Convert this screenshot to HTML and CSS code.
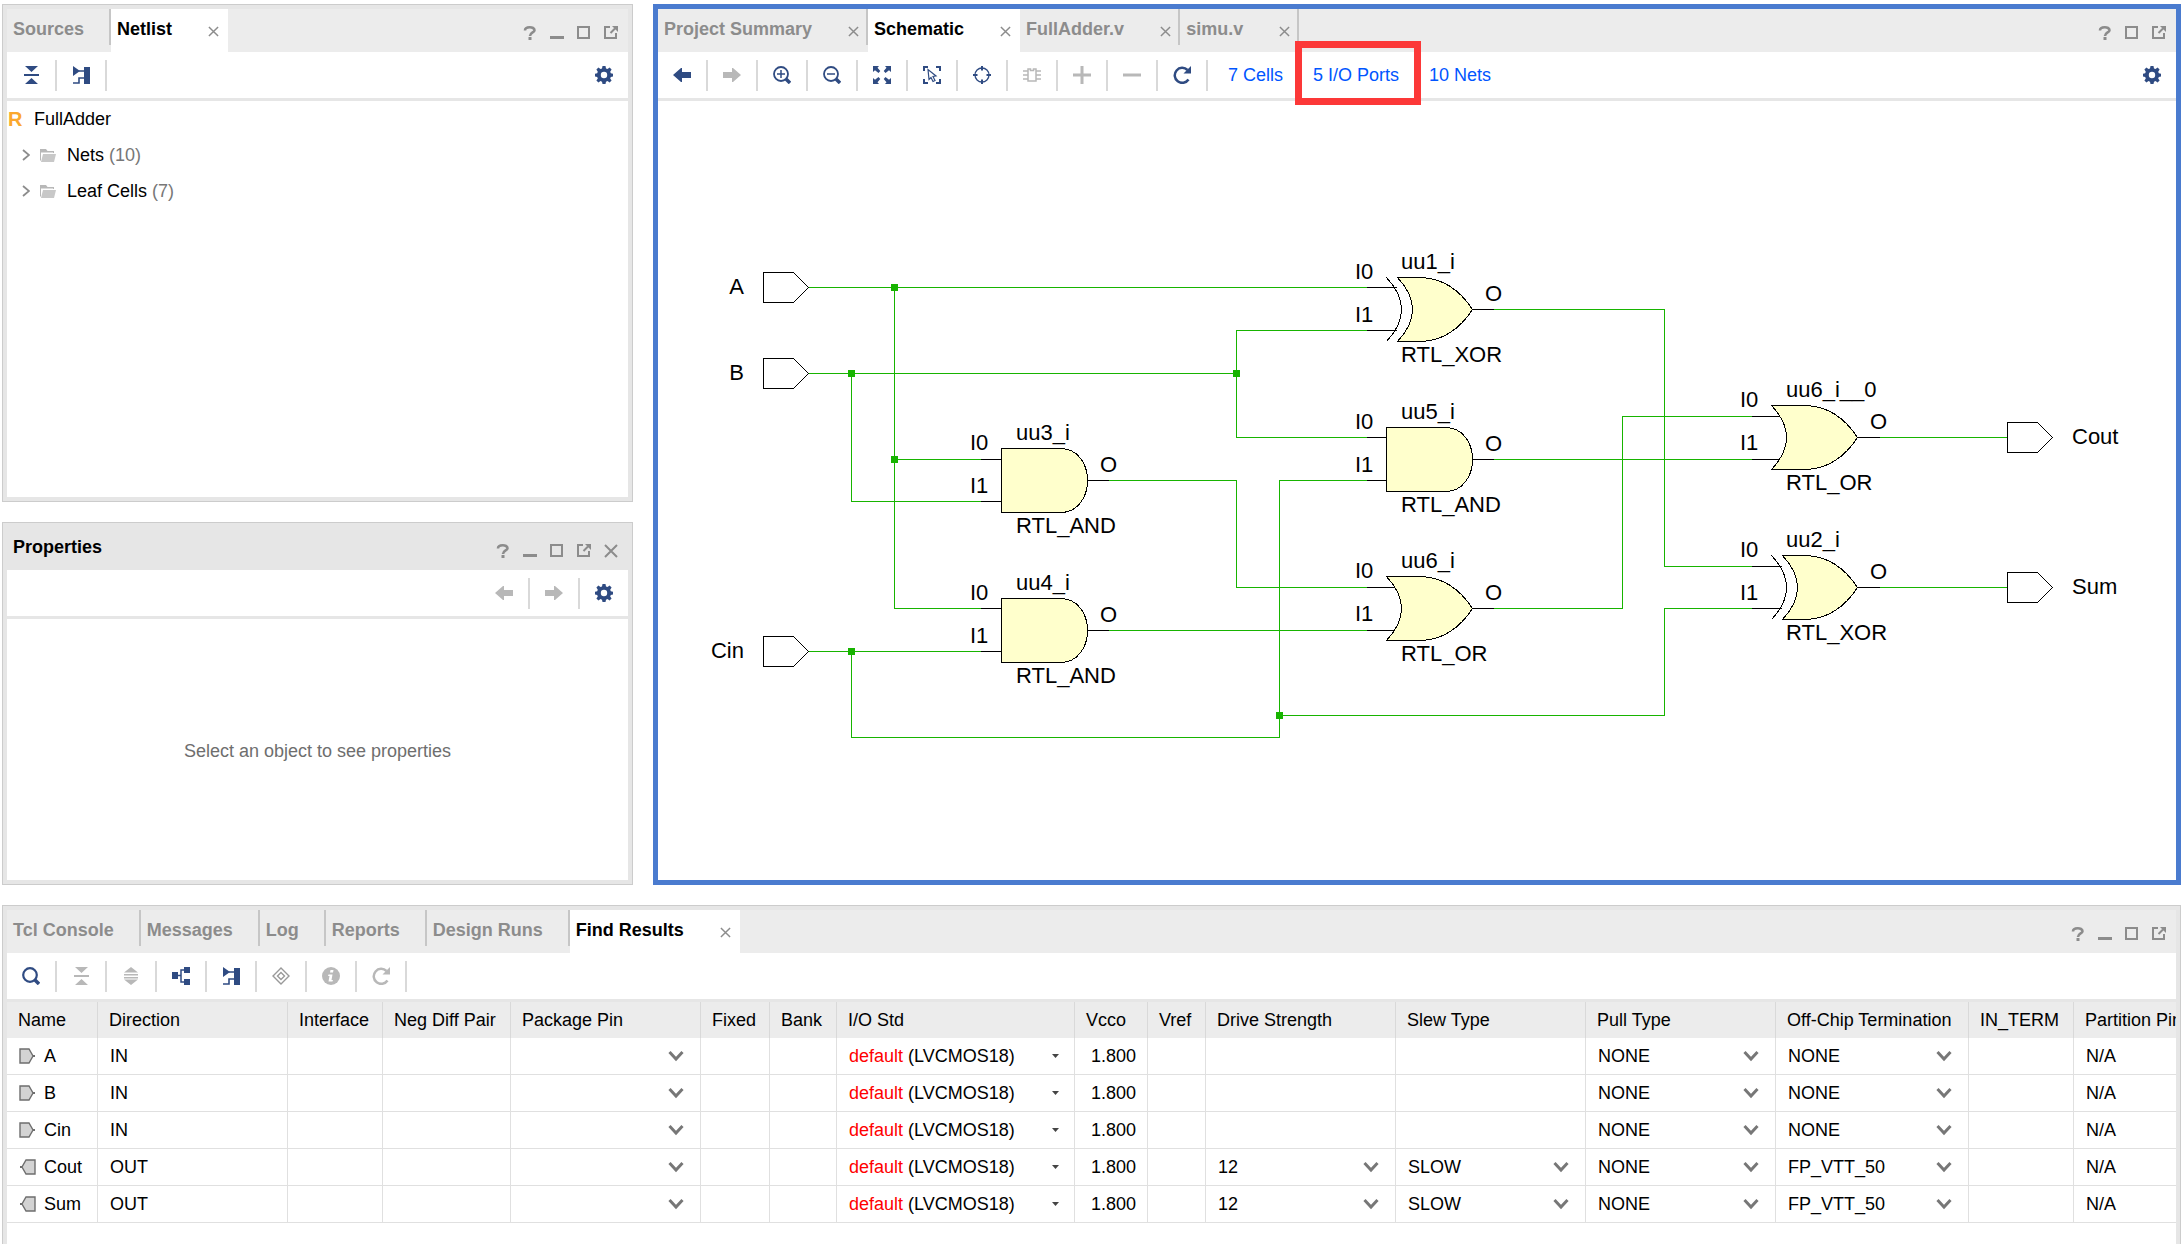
FILE: index.html
```html
<!DOCTYPE html>
<html lang="en">
<head>
<meta charset="utf-8">
<title>FullAdder - Schematic</title>
<link rel="stylesheet" href="styles.css">
</head>
<body>
<svg class="sprite" aria-hidden="true">
  <symbol id="i-back" viewBox="0 0 18 18"><path fill="currentColor" d="M0 9 8 2h1v4h9v6H9v4H8z"/></symbol>
  <symbol id="i-forward" viewBox="0 0 18 18"><path fill="currentColor" d="M18 9 10 2H9v4H0v6h9v4h1z"/></symbol>
  <symbol id="i-collapse" viewBox="0 0 18 18"><path fill="currentColor" d="M3 0h13L9.500 6zM2 8h15v2H2zM3 18h13L9.500 12z"/></symbol>
  <symbol id="i-expand" viewBox="0 0 18 18"><path fill="currentColor" d="M9 0l7 5.500H2zM2 7h14v1.500H2zM2 10h14v1.500H2zM9 18l7-5.500H2z"/></symbol>
  <symbol id="i-netlist" viewBox="0 0 18 18"><path fill="currentColor" d="M1 0v10l7-5zM12 1h6v17h-6z"/><path fill="none" stroke="currentColor" stroke-width="1.600" d="M7 5h5M1 17h6v-5h5"/></symbol>
  <symbol id="i-gear" viewBox="0 0 18 18"><path fill="currentColor" fill-rule="evenodd" d="M7.500 0h3l.5 2.400 1.500.7 2.100-1.500 2 2-1.400 2.200.6 1.400 2.200.5v2.800l-2.200.5-.6 1.400 1.400 2.100-2 2-2.100-1.400-1.500.6-.5 2.300h-3L7 15.700l-1.500-.6-2.100 1.400-2-2 1.400-2.100-.6-1.400L0 10.500V7.700l2.200-.5.6-1.400L1.400 3.600l2-2 2.100 1.500L7 2.400zM9 5.800a3.200 3.200 0 1 0 0 6.400 3.200 3.200 0 0 0 0-6.400z"/></symbol>
  <symbol id="i-search" viewBox="0 0 18 18"><g fill="none" stroke="currentColor"><circle cx="8" cy="8" r="6.800" stroke-width="2.200"/><path d="m13 13 4 4" stroke-width="3.500"/></g></symbol>
  <symbol id="i-zoomin" viewBox="0 0 18 18"><g fill="none" stroke="currentColor"><circle cx="8" cy="8" r="7" stroke-width="1.800"/><path d="m13 13 4 4" stroke-width="3.500"/><path d="M4 8h8M8 4v8" stroke-width="1.500"/></g></symbol>
  <symbol id="i-zoomout" viewBox="0 0 18 18"><g fill="none" stroke="currentColor"><circle cx="8" cy="8" r="7" stroke-width="1.800"/><path d="m13 13 4 4" stroke-width="3.500"/><path d="M4 8h8" stroke-width="1.500"/></g></symbol>
  <symbol id="i-fit" viewBox="0 0 18 18"><path fill="currentColor" d="M0 0h6L4.500 1.700 7.300 5 5.500 7 2 4.200 0 6zM18 0v6l-2-1.800L12.500 7l-1.800-2 2.800-3.300L12 0zM0 18v-6l2 1.800L5.500 11l1.800 2-2.800 3.300L6 18zM18 18h-6l1.500-1.700-2.800-3.300 1.800-2 3.500 2.800 2-1.800z"/></symbol>
  <symbol id="i-select" viewBox="0 0 18 18"><g fill="none" stroke="currentColor"><path stroke-width="2" d="M1 5V1h4M13 1h4v4M1 13v4h4M13 17h4v-4"/><path stroke-width="1.200" d="m5 3.500 1 10 2-2 2 4 2-1-2-4 3-.5z"/></g></symbol>
  <symbol id="i-target" viewBox="0 0 18 18"><g fill="none" stroke="currentColor"><circle cx="9" cy="9" r="7" stroke-width="1.300"/><path stroke-width="2" d="M9 0v4.500M9 13.500V18M0 9h4.500M13.500 9H18"/></g></symbol>
  <symbol id="i-cell" viewBox="0 0 18 18"><path fill="none" stroke="currentColor" stroke-width="1.500" d="M5 3h2.500v1.500h3V3H13v12H5zM0 5h5M0 9h5M0 13h5M13 5h5M13 9h5M13 13h5"/></symbol>
  <symbol id="i-plus" viewBox="0 0 18 18"><path fill="currentColor" d="M7.500 0h3v7.500H18v3h-7.500V18h-3v-7.500H0v-3h7.500z"/></symbol>
  <symbol id="i-minus" viewBox="0 0 18 18"><path fill="currentColor" d="M0 7.500h18v3H0z"/></symbol>
  <symbol id="i-reload" viewBox="0 0 18 18"><path fill="none" stroke="currentColor" stroke-width="2.500" d="M15.500 13.500A7.500 7.500 0 1 1 14.500 4"/><path fill="currentColor" d="M18 0v7.500h-7.500z"/></symbol>
  <symbol id="i-tree" viewBox="0 0 18 18"><path fill="currentColor" d="M0 5h6v7H0zM12 0h6v6h-6zM12 12h6v6h-6z"/><path fill="none" stroke="currentColor" stroke-width="1.500" d="M6 8.500h3M13 3H9v12h4"/></symbol>
  <symbol id="i-diamond" viewBox="0 0 18 18"><g fill="none" stroke="currentColor" stroke-width="1.400"><path d="m9 1 8 8-8 8-8-8z"/><path d="m9 5.500 3.500 3.500L9 12.500 5.500 9z"/></g></symbol>
  <symbol id="i-info" viewBox="0 0 18 18"><circle cx="9" cy="9" r="9" fill="currentColor"/><path fill="#fff" d="M8.500 3h3L11 5.500H8zM6.500 7.500h4L9.500 13H11l-.5 1.500H6.500L7.500 9H6z"/></symbol>
  <symbol id="i-close" viewBox="0 0 12 12"><path fill="none" stroke="currentColor" stroke-width="1.600" d="m1 1 10 10M11 1 1 11"/></symbol>
  <symbol id="i-help" viewBox="0 0 14 14"><path fill="none" stroke="currentColor" stroke-width="2.600" d="M2 4.500C2 .3 11.500.3 11.500 4.200 11.500 6.500 7 6.500 7 10"/><path fill="currentColor" d="M5.500 11h3v3h-3z"/></symbol>
  <symbol id="i-min" viewBox="0 0 14 14"><path fill="currentColor" d="M0 10h14v3H0z"/></symbol>
  <symbol id="i-max" viewBox="0 0 14 14"><path fill="none" stroke="currentColor" stroke-width="2" d="M1 1h11v11H1z"/></symbol>
  <symbol id="i-float" viewBox="0 0 14 14"><path fill="none" stroke="currentColor" stroke-width="2" d="M6 1H1v11h11V7M6.500 7 11 2.500"/><path fill="currentColor" d="M8 0h6v6z"/></symbol>
  <symbol id="i-x" viewBox="0 0 14 14"><path fill="none" stroke="currentColor" stroke-width="2" d="m1 1 12 12M13 1 1 13"/></symbol>
  <symbol id="i-chev" viewBox="0 0 16 12"><path fill="none" stroke="currentColor" stroke-width="3" d="m1.500 2 6.500 7 6.500-7"/></symbol>
  <symbol id="i-twist" viewBox="0 0 8 12"><path fill="none" stroke="currentColor" stroke-width="1.800" d="m1 1 6 5-6 5"/></symbol>
  <symbol id="i-folder" viewBox="0 0 16 14"><path fill="#b8b8b8" d="M0 1h6l1.500 2H14v2h-1V4.500H1V12L0 13z"/><path fill="#c8c8c8" d="M3 6h13l-2 8H1z"/></symbol>
  <symbol id="i-in" viewBox="0 0 17 16"><path fill="#d3d3d3" stroke="#6e6e6e" stroke-width="1.400" d="M1 1h9l4 7-4 7H1z"/><path stroke="#6e6e6e" stroke-width="2" d="M14 8h2"/></symbol>
  <symbol id="i-out" viewBox="0 0 17 16"><path fill="#d3d3d3" stroke="#6e6e6e" stroke-width="1.400" d="M16 1H7L3 8l4 7h9z"/><path stroke="#6e6e6e" stroke-width="2" d="M3 8H1"/></symbol>
  <symbol id="i-tiny" viewBox="0 0 7 4"><path fill="#444" d="M0 0h7L3.500 4z"/></symbol>
</svg>

<main class="ide">
  <div class="workspace">
    <div class="side">
      <section class="panel">
        <header class="tabbar">
          <button class="tab">Sources</button>
          <button class="tab active">Netlist<svg class="x"><use href="#i-close"/></svg></button>
          <div class="winctl">
            <button aria-label="Help"><svg><use href="#i-help"/></svg></button>
            <button aria-label="Minimize"><svg><use href="#i-min"/></svg></button>
            <button aria-label="Maximize"><svg><use href="#i-max"/></svg></button>
            <button aria-label="Float"><svg><use href="#i-float"/></svg></button>
          </div>
        </header>
        <div class="toolbar">
          <button aria-label="Collapse all"><svg><use href="#i-collapse"/></svg></button>
          <button aria-label="Show netlist"><svg><use href="#i-netlist"/></svg></button>
          <button class="end" aria-label="Settings"><svg><use href="#i-gear"/></svg></button>
        </div>
        <ul class="tree">
          <li class="root"><b>R</b>FullAdder</li>
          <li><svg class="twist"><use href="#i-twist"/></svg><svg class="folder"><use href="#i-folder"/></svg>Nets <span>(10)</span></li>
          <li><svg class="twist"><use href="#i-twist"/></svg><svg class="folder"><use href="#i-folder"/></svg>Leaf Cells <span>(7)</span></li>
        </ul>
      </section>

      <section class="panel">
        <header class="tabbar titlebar">
          <h2>Properties</h2>
          <div class="winctl">
            <button aria-label="Help"><svg><use href="#i-help"/></svg></button>
            <button aria-label="Minimize"><svg><use href="#i-min"/></svg></button>
            <button aria-label="Maximize"><svg><use href="#i-max"/></svg></button>
            <button aria-label="Float"><svg><use href="#i-float"/></svg></button>
            <button aria-label="Close"><svg><use href="#i-x"/></svg></button>
          </div>
        </header>
        <div class="toolbar">
          <button class="end off" aria-label="Back"><svg><use href="#i-back"/></svg></button>
          <button class="off" aria-label="Forward"><svg><use href="#i-forward"/></svg></button>
          <button class="last" aria-label="Settings"><svg><use href="#i-gear"/></svg></button>
        </div>
        <p class="empty">Select an object to see properties</p>
      </section>
    </div>

    <section class="panel focused">
      <header class="tabbar">
        <button class="tab">Project Summary<svg class="x"><use href="#i-close"/></svg></button>
        <button class="tab active">Schematic<svg class="x"><use href="#i-close"/></svg></button>
        <button class="tab">FullAdder.v<svg class="x"><use href="#i-close"/></svg></button>
        <button class="tab">simu.v<svg class="x"><use href="#i-close"/></svg></button>
        <div class="winctl">
          <button aria-label="Help"><svg><use href="#i-help"/></svg></button>
          <button aria-label="Maximize"><svg><use href="#i-max"/></svg></button>
          <button aria-label="Float"><svg><use href="#i-float"/></svg></button>
        </div>
      </header>
      <div class="toolbar">
        <button aria-label="Back"><svg><use href="#i-back"/></svg></button>
        <button class="off" aria-label="Forward"><svg><use href="#i-forward"/></svg></button>
        <button aria-label="Zoom in"><svg><use href="#i-zoomin"/></svg></button>
        <button aria-label="Zoom out"><svg><use href="#i-zoomout"/></svg></button>
        <button aria-label="Zoom fit"><svg><use href="#i-fit"/></svg></button>
        <button aria-label="Select area"><svg><use href="#i-select"/></svg></button>
        <button aria-label="Autofit selection"><svg><use href="#i-target"/></svg></button>
        <button class="off" aria-label="Expand cell"><svg><use href="#i-cell"/></svg></button>
        <button class="off" aria-label="Add"><svg><use href="#i-plus"/></svg></button>
        <button class="off" aria-label="Remove"><svg><use href="#i-minus"/></svg></button>
        <button aria-label="Regenerate"><svg><use href="#i-reload"/></svg></button>
        <nav class="links">
          <a href="#cells">7 Cells</a>
          <a href="#ports" class="marked">5 I/O Ports</a>
          <a href="#nets">10 Nets</a>
        </nav>
        <button class="end" aria-label="Settings"><svg><use href="#i-gear"/></svg></button>
      </div>
      <svg class="schematic" viewBox="0 0 1518 779" role="img" aria-label="Full adder schematic">
        <defs>
          <g id="and"><path class="body" d="M0-32h59C76-32 86-17 86 0S76 32 59 32H0z"/></g>
          <g id="or"><path class="body" d="M0-32h35C56-31 73-20 86 0 73 20 56 31 35 32H0Q15 16 15 0T0-32z"/></g>
          <g id="xor"><path class="line" d="M0-32Q15-16 15 0T0 32"/><path class="body" d="M11-32h24C56-31 73-20 86 0 73 20 56 31 35 32H11Q26 16 26 0T11-32z"/></g>
          <g id="port"><path class="line" d="M0-15h30L45 0 30 15H0z"/></g>
        </defs>
        <g class="crisp" transform="translate(.5 .5)">
          <g class="wire">
            <path d="M150 186H708M236 186V507H322M236 358H322"/>
            <path d="M150 272H578M193 272V400H322M708 229H578V336H708"/>
            <path d="M150 550H322M193 550V636H621V379H708M621 614H1006V507H1093"/>
            <path d="M450 379H578V486H708M450 529H708"/>
            <path d="M835 208H1006V465H1093M835 358H1093M835 507H964V315H1093"/>
            <path d="M1221 336H1349M1221 486H1349"/>
          </g>
          <path class="line" d="M322 358H343M322 400H343M429 379H450M322 507H343M322 550H343M429 529H450"/>
          <path class="line" d="M708 186H738M708 229H738M814 208H835M708 336H728M708 379H728M814 358H835M708 486H738M708 529H738M814 507H835"/>
          <path class="line" d="M1093 315H1123M1093 358H1123M1199 336H1221M1093 465H1123M1093 507H1123M1199 486H1221"/>
          <use href="#and" x="343" y="379"/>
          <use href="#and" x="343" y="529"/>
          <use href="#xor" x="728" y="208"/>
          <use href="#and" x="728" y="358"/>
          <use href="#or" x="728" y="507"/>
          <use href="#or" x="1113" y="336"/>
          <use href="#xor" x="1113" y="486"/>
          <use href="#port" x="105" y="186"/>
          <use href="#port" x="105" y="272"/>
          <use href="#port" x="105" y="550"/>
          <use href="#port" x="1349" y="336"/>
          <use href="#port" x="1349" y="486"/>
        </g>
        <path class="node" d="M233 183h7v7h-7zM233 355h7v7h-7zM190 269h7v7h-7zM190 547h7v7h-7zM575 269h7v7h-7zM618 611h7v7h-7z"/>
        <g class="names">
          <g text-anchor="end"><text x="86" y="193">A</text><text x="86" y="279">B</text><text x="86" y="557">Cin</text></g>
          <text x="1414" y="343">Cout</text><text x="1414" y="493">Sum</text>
          <text x="312" y="349">I0</text><text x="312" y="392">I1</text><text x="358" y="339">uu3_i</text><text x="442" y="371">O</text><text x="358" y="432">RTL_AND</text>
          <text x="312" y="499">I0</text><text x="312" y="542">I1</text><text x="358" y="489">uu4_i</text><text x="442" y="521">O</text><text x="358" y="582">RTL_AND</text>
          <text x="697" y="178">I0</text><text x="697" y="221">I1</text><text x="743" y="168">uu1_i</text><text x="827" y="200">O</text><text x="743" y="261">RTL_XOR</text>
          <text x="697" y="328">I0</text><text x="697" y="371">I1</text><text x="743" y="318">uu5_i</text><text x="827" y="350">O</text><text x="743" y="411">RTL_AND</text>
          <text x="697" y="477">I0</text><text x="697" y="520">I1</text><text x="743" y="467">uu6_i</text><text x="827" y="499">O</text><text x="743" y="560">RTL_OR</text>
          <text x="1082" y="306">I0</text><text x="1082" y="349">I1</text><text x="1128" y="296">uu6_i__0</text><text x="1212" y="328">O</text><text x="1128" y="389">RTL_OR</text>
          <text x="1082" y="456">I0</text><text x="1082" y="499">I1</text><text x="1128" y="446">uu2_i</text><text x="1212" y="478">O</text><text x="1128" y="539">RTL_XOR</text>
        </g>
      </svg>
    </section>
  </div>

  <section class="panel results">
    <header class="tabbar">
      <button class="tab">Tcl Console</button>
      <button class="tab">Messages</button>
      <button class="tab">Log</button>
      <button class="tab">Reports</button>
      <button class="tab">Design Runs</button>
      <button class="tab active">Find Results<svg class="x"><use href="#i-close"/></svg></button>
      <div class="winctl">
        <button aria-label="Help"><svg><use href="#i-help"/></svg></button>
        <button aria-label="Minimize"><svg><use href="#i-min"/></svg></button>
        <button aria-label="Maximize"><svg><use href="#i-max"/></svg></button>
        <button aria-label="Float"><svg><use href="#i-float"/></svg></button>
      </div>
    </header>
    <div class="toolbar">
      <button aria-label="Search"><svg><use href="#i-search"/></svg></button>
      <button class="off" aria-label="Collapse all"><svg><use href="#i-collapse"/></svg></button>
      <button class="off" aria-label="Expand all"><svg><use href="#i-expand"/></svg></button>
      <button aria-label="Group"><svg><use href="#i-tree"/></svg></button>
      <button aria-label="Show schematic"><svg><use href="#i-netlist"/></svg></button>
      <button class="mid" aria-label="Mark"><svg><use href="#i-diamond"/></svg></button>
      <button class="off" aria-label="Information"><svg><use href="#i-info"/></svg></button>
      <button class="off" aria-label="Refresh"><svg><use href="#i-reload"/></svg></button>
    </div>
    <div class="tablewrap">
    <table>
      <colgroup>
        <col class="c-name"><col class="c-wide"><col class="c-intf"><col class="c-neg"><col class="c-wide"><col class="c-fixed"><col class="c-bank"><col class="c-std"><col class="c-vcco"><col class="c-vref"><col class="c-wide"><col class="c-wide"><col class="c-wide"><col class="c-term"><col class="c-in"><col>
      </colgroup>
      <thead>
        <tr><th>Name</th><th>Direction</th><th>Interface</th><th>Neg Diff Pair</th><th>Package Pin</th><th>Fixed</th><th>Bank</th><th>I/O Std</th><th>Vcco</th><th>Vref</th><th>Drive Strength</th><th>Slew Type</th><th>Pull Type</th><th>Off-Chip Termination</th><th>IN_TERM</th><th>Partition Pin</th></tr>
      </thead>
      <tbody>
        <tr>
          <td><span class="port"><svg><use href="#i-in"/></svg>A</span></td><td>IN</td><td></td><td></td>
          <td><span class="pick"><select aria-label="Package pin of A"><option></option></select><svg><use href="#i-chev"/></svg></span></td><td></td><td></td>
          <td><button class="std" aria-label="I/O standard of A"><span><em>default</em> (LVCMOS18)</span><svg><use href="#i-tiny"/></svg></button></td><td class="num">1.800</td><td></td><td></td><td></td>
          <td><span class="pick"><select aria-label="Pull type of A"><option>NONE</option></select><svg><use href="#i-chev"/></svg></span></td>
          <td><span class="pick"><select aria-label="Termination of A"><option>NONE</option></select><svg><use href="#i-chev"/></svg></span></td><td></td><td>N/A</td>
        </tr>
        <tr>
          <td><span class="port"><svg><use href="#i-in"/></svg>B</span></td><td>IN</td><td></td><td></td>
          <td><span class="pick"><select aria-label="Package pin of B"><option></option></select><svg><use href="#i-chev"/></svg></span></td><td></td><td></td>
          <td><button class="std" aria-label="I/O standard of B"><span><em>default</em> (LVCMOS18)</span><svg><use href="#i-tiny"/></svg></button></td><td class="num">1.800</td><td></td><td></td><td></td>
          <td><span class="pick"><select aria-label="Pull type of B"><option>NONE</option></select><svg><use href="#i-chev"/></svg></span></td>
          <td><span class="pick"><select aria-label="Termination of B"><option>NONE</option></select><svg><use href="#i-chev"/></svg></span></td><td></td><td>N/A</td>
        </tr>
        <tr>
          <td><span class="port"><svg><use href="#i-in"/></svg>Cin</span></td><td>IN</td><td></td><td></td>
          <td><span class="pick"><select aria-label="Package pin of Cin"><option></option></select><svg><use href="#i-chev"/></svg></span></td><td></td><td></td>
          <td><button class="std" aria-label="I/O standard of Cin"><span><em>default</em> (LVCMOS18)</span><svg><use href="#i-tiny"/></svg></button></td><td class="num">1.800</td><td></td><td></td><td></td>
          <td><span class="pick"><select aria-label="Pull type of Cin"><option>NONE</option></select><svg><use href="#i-chev"/></svg></span></td>
          <td><span class="pick"><select aria-label="Termination of Cin"><option>NONE</option></select><svg><use href="#i-chev"/></svg></span></td><td></td><td>N/A</td>
        </tr>
        <tr>
          <td><span class="port"><svg><use href="#i-out"/></svg>Cout</span></td><td>OUT</td><td></td><td></td>
          <td><span class="pick"><select aria-label="Package pin of Cout"><option></option></select><svg><use href="#i-chev"/></svg></span></td><td></td><td></td>
          <td><button class="std" aria-label="I/O standard of Cout"><span><em>default</em> (LVCMOS18)</span><svg><use href="#i-tiny"/></svg></button></td><td class="num">1.800</td><td></td>
          <td><span class="pick"><select aria-label="Drive strength of Cout"><option>12</option></select><svg><use href="#i-chev"/></svg></span></td>
          <td><span class="pick"><select aria-label="Slew type of Cout"><option>SLOW</option></select><svg><use href="#i-chev"/></svg></span></td>
          <td><span class="pick"><select aria-label="Pull type of Cout"><option>NONE</option></select><svg><use href="#i-chev"/></svg></span></td>
          <td><span class="pick"><select aria-label="Termination of Cout"><option>FP_VTT_50</option></select><svg><use href="#i-chev"/></svg></span></td><td></td><td>N/A</td>
        </tr>
        <tr>
          <td><span class="port"><svg><use href="#i-out"/></svg>Sum</span></td><td>OUT</td><td></td><td></td>
          <td><span class="pick"><select aria-label="Package pin of Sum"><option></option></select><svg><use href="#i-chev"/></svg></span></td><td></td><td></td>
          <td><button class="std" aria-label="I/O standard of Sum"><span><em>default</em> (LVCMOS18)</span><svg><use href="#i-tiny"/></svg></button></td><td class="num">1.800</td><td></td>
          <td><span class="pick"><select aria-label="Drive strength of Sum"><option>12</option></select><svg><use href="#i-chev"/></svg></span></td>
          <td><span class="pick"><select aria-label="Slew type of Sum"><option>SLOW</option></select><svg><use href="#i-chev"/></svg></span></td>
          <td><span class="pick"><select aria-label="Pull type of Sum"><option>NONE</option></select><svg><use href="#i-chev"/></svg></span></td>
          <td><span class="pick"><select aria-label="Termination of Sum"><option>FP_VTT_50</option></select><svg><use href="#i-chev"/></svg></span></td><td></td><td>N/A</td>
        </tr>
      </tbody>
    </table>
    </div>
  </section>
</main>
</body>
</html>
```
FILE: styles.css
```css
* { box-sizing: border-box; }
body {
  margin: 0;
  background: #fff;
  color: #000;
  font: 18px/22px "Liberation Sans", Arial, sans-serif;
}
button, select {
  margin: 0;
  padding: 0;
  border: 0;
  background: none;
  color: inherit;
  font: inherit;
  appearance: none;
}
.sprite { display: none; }

/* Overall arrangement */
.ide {
  display: grid;
  grid-template-rows: minmax(0, 881fr) minmax(0, 339fr);
  gap: 20px;
  height: 100vh;
  padding: 4px 3px 0 2px;
}
.workspace {
  display: grid;
  grid-template-columns: minmax(0, 631fr) minmax(0, 1528fr);
  gap: 20px;
}
.side {
  display: grid;
  grid-template-rows: minmax(0, 498fr) minmax(0, 363fr);
  gap: 20px;
}
.panel {
  display: flex;
  flex-direction: column;
  min-width: 0;
  min-height: 0;
  border: 1px solid #ccc;
  outline: 4px solid #e6e6e6;
  outline-offset: -5px;
  padding: 4px;
}
.panel.focused {
  border: 5px solid #4a7bcf;
  outline: 0;
  padding: 0;
}
.panel.results {
  border-bottom: 0;
  padding-bottom: 0;
  outline: 0;
  background: linear-gradient(#e6e6e6, #e6e6e6) left / 4px 100% no-repeat,
              linear-gradient(#e6e6e6, #e6e6e6) right / 4px 100% no-repeat,
              linear-gradient(#e6e6e6, #e6e6e6) top / 100% 4px no-repeat;
}

/* Tabs and panel titles */
.tabbar {
  flex: none;
  display: flex;
  height: 43px;
  background: #ececec;
}
.titlebar { background: #e6e6e6; }
.titlebar h2 {
  margin: 0;
  padding: 9px 6px 0;
  font-size: 18px;
  line-height: 22px;
}
.tab {
  display: flex;
  align-items: flex-start;
  padding: 9px 27px 0 6px;
  background: linear-gradient(#c6c6c6, #c6c6c6) right top / 2px 36px no-repeat;
  color: #8c8c8c;
  font-weight: 700;
  white-space: nowrap;
}
.tab:has(.x) { padding-right: 9px; }
.tab.active { background: #fff; color: #000; }
.x {
  width: 11px;
  height: 11px;
  margin: 8px 0 0 36px;
  color: #8c8c8c;
}
.winctl {
  display: flex;
  margin-left: auto;
  padding: 5px 4px 0 0;
  color: #8c8c8c;
}
.winctl button { width: 27px; }
.winctl svg { display: block; width: 14px; height: 14px; margin: auto; }

/* Icon toolbars */
.toolbar {
  flex: none;
  display: flex;
  align-items: center;
  height: 49px;
  border-bottom: 3px solid #e6e6e6;
  color: #2f4b82;
}
.toolbar button {
  flex: none;
  width: 50px;
  height: 31px;
  border-right: 2px solid #d9d9d9;
}
.toolbar button svg { display: block; width: 18px; height: 18px; margin: auto; }
.toolbar .end { margin-left: auto; }
.toolbar .end:last-child, .toolbar .last { width: 48px; border: 0; }
.toolbar .off { color: #b8b8b8; }
.toolbar .mid { color: #999; }
.links {
  display: flex;
  gap: 30px;
  margin-left: 20px;
  white-space: nowrap;
}
.links a { color: #0055ff; text-decoration: none; }
.marked { position: relative; }
.marked::after {
  content: "";
  position: absolute;
  inset: -23px -22px -19px -18px;
  border: 7px solid #fc3838;
}

/* Netlist tree */
.tree { margin: 0; padding: 0; list-style: none; }
.tree li {
  display: flex;
  align-items: center;
  height: 36px;
  padding-left: 15px;
  white-space: pre;
}
.tree .root { padding-left: 1px; }
.tree b { width: 26px; color: #fba82e; font-size: 20px; }
.tree span { color: #777; }
.twist { width: 8px; height: 12px; margin-right: 10px; color: #8c8c8c; }
.folder { width: 16px; height: 14px; margin-right: 11px; }

.empty { margin: auto; padding-top: 3px; color: #6e6e6e; }

/* Schematic drawing */
.schematic { flex: 1; min-height: 0; width: 100%; }
.crisp { shape-rendering: crispEdges; }
.wire { fill: none; stroke: #17b400; }
.node { fill: #17b400; }
.line { fill: none; stroke: #000; }
.body { fill: #ffffcc; stroke: #000; }
.names { font-size: 22px; fill: #000; }

/* Port table */
.tablewrap { overflow: hidden; }
table { width: 100%; table-layout: fixed; border-collapse: separate; border-spacing: 0; }
.c-name { width: 91px; }
.c-wide { width: 190px; }
.c-intf { width: 95px; }
.c-neg { width: 128px; }
.c-fixed { width: 69px; }
.c-bank { width: 67px; }
.c-std { width: 238px; }
.c-vcco { width: 73px; }
.c-vref { width: 58px; }
.c-term { width: 193px; }
.c-in { width: 105px; }
th, td {
  height: 37px;
  padding: 0 0 0 12px;
  border: solid #e0e0e0;
  border-width: 0 1px 1px 0;
  text-align: left;
  white-space: nowrap;
}
th {
  height: 36px;
  padding-left: 11px;
  background: #ececec;
  border-width: 0 1px 0 0;
  border-color: #d9d9d9;
  font-weight: 400;
  overflow: hidden;
}
th:last-child, td:last-child { border-right: 0; }
td.num { padding: 0 11px 0 0; text-align: right; }
.port { display: flex; align-items: center; gap: 8px; }
.port svg { width: 17px; height: 16px; }
.pick { display: grid; align-items: center; }
.pick select, .pick svg { grid-area: 1 / 1; }
.pick select { width: 100%; height: 22px; }
.pick svg {
  justify-self: end;
  width: 16px;
  height: 12px;
  margin-right: 16px;
  color: #777;
  pointer-events: none;
}
.std {
  display: flex;
  align-items: center;
  justify-content: space-between;
  width: 100%;
  padding-right: 15px;
}
.std em { color: #f00; font-style: normal; }
.std svg { width: 7px; height: 4px; }
```
